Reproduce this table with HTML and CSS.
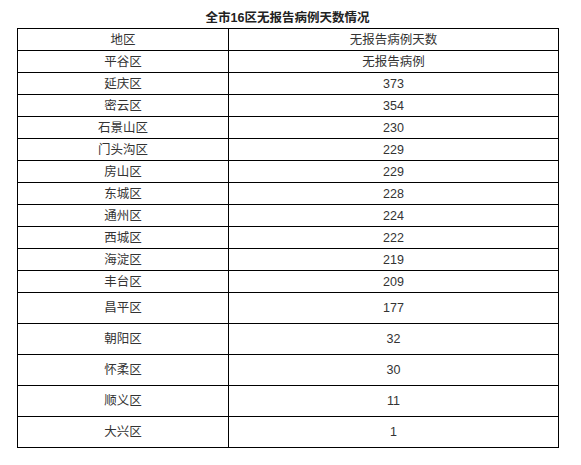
FILE: index.html
```html
<!DOCTYPE html>
<html lang="zh-CN">
<head>
<meta charset="utf-8">
<link rel="stylesheet" href="styles.css">
</head>
<body>
<div class="page">
  <div class="title">全市16区无报告病例天数情况</div>
  <table class="data">
    <colgroup><col class="c1"><col class="c2"></colgroup>
    <tbody>
      <tr><td>地区</td><td>无报告病例天数</td></tr>
      <tr><td>平谷区</td><td>无报告病例</td></tr>
      <tr><td>延庆区</td><td>373</td></tr>
      <tr><td>密云区</td><td>354</td></tr>
      <tr><td>石景山区</td><td>230</td></tr>
      <tr><td>门头沟区</td><td>229</td></tr>
      <tr><td>房山区</td><td>229</td></tr>
      <tr><td>东城区</td><td>228</td></tr>
      <tr><td>通州区</td><td>224</td></tr>
      <tr><td>西城区</td><td>222</td></tr>
      <tr><td>海淀区</td><td>219</td></tr>
      <tr><td>丰台区</td><td>209</td></tr>
      <tr class="tall"><td>昌平区</td><td>177</td></tr>
      <tr class="tall"><td>朝阳区</td><td>32</td></tr>
      <tr class="tall"><td>怀柔区</td><td>30</td></tr>
      <tr class="tall"><td>顺义区</td><td>11</td></tr>
      <tr class="tall"><td>大兴区</td><td>1</td></tr>
    </tbody>
  </table>
</div>
</body>
</html>
```
FILE: styles.css
```css
html, body {
  margin: 0;
  padding: 0;
  background: #ffffff;
}
.page {
  padding: 10px 0 0 17px;
  width: 541px;
  font-family: "Liberation Sans", "Microsoft YaHei", "Noto Sans CJK SC", sans-serif;
  color: #333333;
  font-size: 12.5px;
}
.title {
  text-align: center;
  font-weight: bold;
  font-size: 12.5px;
  line-height: 17px;
  height: 18px;
  color: #222222;
}
.data {
  border-collapse: collapse;
  width: 541px;
  table-layout: fixed;
}
.c1 { width: 211px; }
.c2 { width: 330px; }
.data td {
  border: 1px solid #000000;
  text-align: center;
  vertical-align: middle;
  padding: 0;
  height: 22px;
  line-height: 16px;
  box-sizing: border-box;
}
.data tr.tall td {
  height: 31px;
}
```
